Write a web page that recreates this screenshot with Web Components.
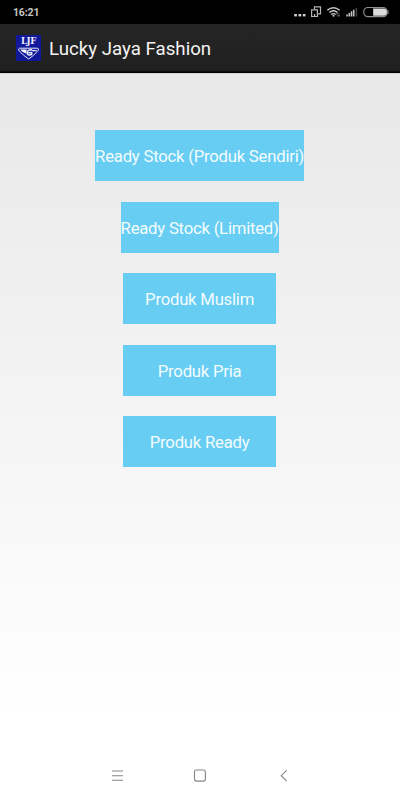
<!DOCTYPE html>
<html lang="id">
<head>
<meta charset="utf-8">
<title>Lucky Jaya Fashion</title>
<style>
html,body{margin:0;height:100%;overflow:hidden}
body{font-family:Roboto,"Liberation Sans",sans-serif}
</style>
</head>
<body>
<shop-app></shop-app>
<script>
const define=(name,html)=>customElements.define(name,class extends HTMLElement{
  constructor(){super();this.attachShadow({mode:'open'}).innerHTML=html;}
});

define('status-bar',`<style>
:host{display:flex;height:24px;background:#000;color:#c6c6c6;align-items:center;justify-content:space-between;box-sizing:border-box;padding-left:13px}
time{font-size:10.5px;line-height:22px;font-weight:700;letter-spacing:-.15px;padding-top:2px}
svg{display:block}
</style><time>16:21</time>
<svg width="110" height="24" viewBox="290 0 110 24" fill="none">
<g fill="#d0d0d0"><rect x="294.2" y="14" width="2.7" height="2.4"/><rect x="298.5" y="14" width="2.7" height="2.4"/><rect x="302.8" y="14" width="2.7" height="2.4"/></g>
<g stroke="#b4b4b4" stroke-width="1.2"><path d="M314.5 9.5V6.8h6v7h-2.8"/><path d="M311.6 9.9h5.8v6.6h-5.8z"/><path d="M314.6 14v2.5" stroke-width="1.3"/></g>
<g stroke="#c8c8c8" stroke-width="1.4"><path d="M327.3 10.3q6.2-5 12.4 0"/><path d="M329.4 12.5q4.1-3.4 8.2 0"/><path d="M331.2 14.5q2.3-1.8 4.6 0"/></g><circle cx="333.5" cy="15.8" r="1" fill="#ccc"/>
<path d="M337.2 12.5v4M336.3 14l.9-1.5.9 1.5M339 12.5v4M338.1 15l.9 1.5.9-1.5" stroke="#666" stroke-width=".7"/>
<g fill="#c4c4c4"><rect x="346.3" y="14.5" width="1.6" height="2"/><rect x="348.5" y="13" width="1.6" height="3.5"/><rect x="350.7" y="11.3" width="1.6" height="5.2"/><rect x="352.9" y="9.7" width="1.6" height="6.8"/><rect x="355.6" y="8" width="1.5" height="8.5" fill="#444"/></g>
<rect x="363.8" y="7.5" width="23.4" height="9.2" rx="4.2" stroke="#8e8e8e" stroke-width="1.2"/>
<path d="M373.2 8.5h10.1a3.6 3.6 0 0 1 0 7.2h-10.1z" fill="#dcdcdc"/><path d="M388 10.5v3.5" stroke="#888" stroke-width="1"/>
</svg>`);

define('shop-logo',`<style>
:host{display:flex;flex-direction:column;align-items:center;width:25px;height:26px;background:#12189a;color:#eef0ff;overflow:hidden}
span{font:700 8.6px/11px "DejaVu Serif",serif;letter-spacing:-.35px;height:10px;padding:1px 0 0}
svg{display:block}
</style><span>LJF</span>
<svg width="25" height="15" viewBox="0 0 25 15" fill="none" stroke="#e6eafa">
<path d="M3.6 2.2H21.2Q23.4 2.4 22.2 4.5Q18 9.5 12.7 13Q7 9.4 3 4.6Q1.8 2.6 3.6 2.2Z" stroke-width="1"/>
<path d="M4.2 3.4H10.6L10.2 7.4Q6.6 6.6 4.2 3.4Z" fill="#fff" stroke="none"/>
<path d="M16 3.7Q11.4 3.4 11.2 6.6Q11.3 9.2 13.5 9.1Q16.2 8.7 15.8 7Q15 5.8 12.4 7" stroke-width="1.5"/><path d="M15.7 4.6h5" stroke-width="1.2"/>
</svg>`);

define('app-bar',`<style>
:host{display:flex;height:49px;box-sizing:border-box;align-items:center;gap:8px;padding:0 0 1px 16px;background:linear-gradient(#252525,#202020 46px,#181818 47px,#000 48px,#000 49px);color:#f3f3f3}
h1{margin:0;padding-top:3px;font-size:18.7px;line-height:25px;font-weight:400;white-space:nowrap}
</style><shop-logo></shop-logo><h1><slot></slot></h1>`);

define('menu-button',`<style>
:host{display:block}
button{display:block;border:0;margin:0;padding:3px 0 0;height:51px;min-width:153px;background:#68cdf2;color:#f3fcff;font:400 16.7px/20px Roboto,"Liberation Sans",sans-serif;letter-spacing:-.22px;white-space:nowrap}
</style><button><slot></slot></button>`);

define('product-menu',`<style>
:host{display:flex;flex:1;flex-direction:column;align-items:center;gap:20.5px;padding:57.4px .8px 0 0;background:linear-gradient(#cfcfcf,#dcdcdc) 0 0/100% 1px no-repeat,linear-gradient(#e8e8e8,#fff 645px);box-sizing:border-box}
</style><slot></slot>`);

define('nav-bar',`<style>
:host{display:flex;height:48px;background:#fff}
svg{display:block}
</style><svg width="400" height="48" viewBox="0 752 400 48" fill="none" stroke="#858585" stroke-width="1.1">
<path d="M112 771h11M112 775.7h11M112 780.3h11"/>
<rect x="194.5" y="770" width="10.9" height="11.1" rx="2"/>
<path d="M286.7 770.3L281.2 775.7L286.7 781.1"/>
</svg>`);

define('shop-app',`<style>
:host{display:flex;flex-direction:column;width:400px;height:800px;background:#fff}
</style><status-bar></status-bar><app-bar>Lucky Jaya Fashion</app-bar>
<product-menu>
<menu-button>Ready Stock (Produk Sendiri)</menu-button>
<menu-button>Ready Stock (Limited)</menu-button>
<menu-button>Produk Muslim</menu-button>
<menu-button>Produk Pria</menu-button>
<menu-button>Produk Ready</menu-button>
</product-menu><nav-bar></nav-bar>`);
</script>
</body>
</html>
